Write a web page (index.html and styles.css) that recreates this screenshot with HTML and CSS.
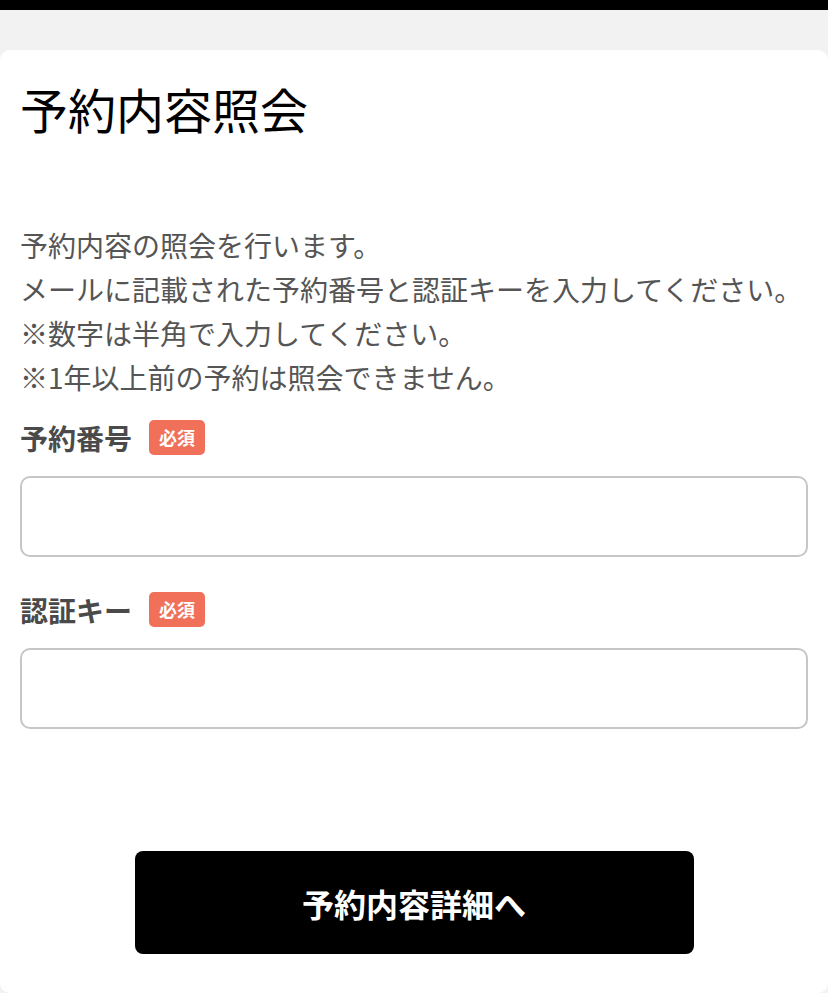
FILE: index.html
```html
<!DOCTYPE html>
<html lang="ja">
<head>
    <meta charset="UTF-8">
    <meta name="viewport" content="width=device-width, initial-scale=1.0">
    <title>予約内容照会</title>
    <link rel="stylesheet" href="styles.css">
</head>
<body>

<div class="top-bar"></div>

<div class="inquiry-card">
    <h1>予約内容照会</h1>
    <p class="lead">
        予約内容の照会を行います。<br>
        メールに記載された予約番号と認証キーを入力してください。<br>
        ※数字は半角で入力してください。<br>
        ※1年以上前の予約は照会できません。
    </p>
    <form id="inquiry-form">
        <div class="form-group">
            <label for="reserve_no">予約番号<span class="required">必須</span></label>
            <input type="text" id="reserve_no" name="reserve_no" required>
        </div>
        <div class="form-group">
            <label for="auth_key">認証キー<span class="required">必須</span></label>
            <input type="text" id="auth_key" name="auth_key" required>
        </div>
        <button type="submit">予約内容詳細へ</button>
    </form>
</div>

</body>
</html>
```

FILE: styles.css
```css
body {
    font-family: "Noto Sans CJK JP", "Noto Sans", sans-serif;
    background-color: #f2f2f2;
    margin: 0;
}
.top-bar {
    height: 10px;
    background-color: #000;
    margin-bottom: 40px;
}
.inquiry-card {
    background-color: #fff;
    border-radius: 10px;
    padding: 30px 20px 39px;
}
.inquiry-card h1 {
    font-size: 48px;
    font-weight: 400;
    line-height: 56px;
    color: #000;
    margin: 0 0 87px;
}
.inquiry-card .lead {
    font-size: 28px;
    line-height: 44px;
    color: #555;
    margin: 0 0 21px;
    white-space: nowrap;
}
.inquiry-card .form-group {
    margin-bottom: 35px;
}
.inquiry-card label {
    display: flex;
    align-items: center;
    height: 35px;
    font-size: 28px;
    font-weight: 700;
    color: #4a4a4a;
    margin-bottom: 21px;
}
.inquiry-card .required {
    display: inline-block;
    margin-left: 17px;
    padding: 0 10px;
    height: 35px;
    line-height: 35px;
    font-size: 18px;
    font-weight: 700;
    color: #fff;
    background-color: #f0705a;
    border-radius: 5px;
}
.inquiry-card input[type="text"] {
    display: block;
    width: 100%;
    height: 81px;
    box-sizing: border-box;
    border: 2px solid #c6c6c6;
    border-radius: 10px;
    padding: 0 16px;
    font-size: 26px;
    font-family: inherit;
}
.inquiry-card button {
    display: block;
    width: 559px;
    height: 103px;
    margin: 122px auto 0;
    background-color: #000;
    color: #fff;
    border: none;
    border-radius: 8px;
    font-family: inherit;
    font-size: 32px;
    font-weight: 700;
    cursor: pointer;
}
```
